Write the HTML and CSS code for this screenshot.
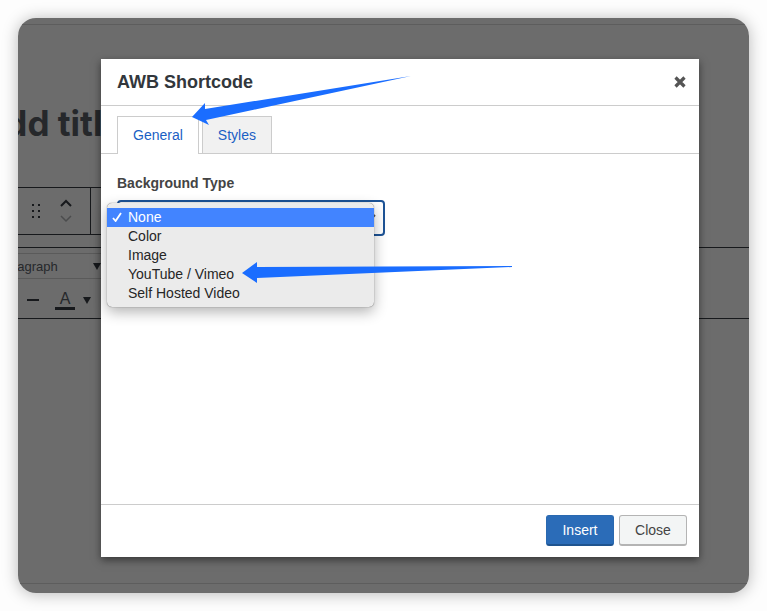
FILE: index.html
```
<!DOCTYPE html>
<html lang="en">
<head>
    <meta charset="UTF-8">
    <meta name="viewport" content="width=device-width, initial-scale=1.0">
    <title>AWB Shortcode</title>
    <link rel="stylesheet" href="styles.css">
</head>
<body>
    <div class="window">
        <div class="editor">
            <div class="topbar"></div>
            <h1 class="post-title">Add title</h1>
            <div class="block-toolbar">
                <div class="movers">
                    <svg width="12" height="16" viewBox="0 0 12 16" fill="#17191c">
                        <path d="M1 1h2v2H1zM1 7h2v2H1zM1 13h2v2H1zM7 1h2v2H7zM7 7h2v2H7zM7 13h2v2H7z"/>
                    </svg>
                    <svg width="12" height="24" viewBox="0 0 12 24" fill="none" stroke-width="2">
                        <path d="M1 7l5-5 5 5" stroke="#17191c"/>
                        <path d="M1 17l5 5 5-5" stroke="#4b4c4d" stroke-width="1.5"/>
                    </svg>
                </div>
            </div>
            <div class="classic">
                <div class="format-row">
                    <span>Paragraph</span>
                    <svg width="8" height="7" viewBox="0 0 8 7"><path d="M0 0h8L4 7z" fill="#17191c"/></svg>
                </div>
                <div class="color-row">
                    <svg width="12" height="2" viewBox="0 0 12 2"><path d="M0 0h12v2H0z" fill="#17191c"/></svg>
                    <span class="text-color">A</span>
                    <svg width="8" height="7" viewBox="0 0 8 7"><path d="M0 0h8L4 7z" fill="#17191c"/></svg>
                </div>
            </div>
            <div class="statusbar"></div>
        </div>

        <div class="modal" role="dialog" aria-labelledby="modal-title">
            <div class="modal-header">
                <h2 id="modal-title">AWB Shortcode</h2>
                <button class="close-icon" aria-label="Close dialog">
                    <svg width="12" height="12" viewBox="0 0 12 12"><path d="M1.5 1.5l9 9M10.5 1.5l-9 9" stroke="#555" stroke-width="3.2"/></svg>
                </button>
            </div>
            <div class="tabs" role="tablist">
                <button class="tab active" role="tab" aria-selected="true">General</button>
                <button class="tab" role="tab" aria-selected="false">Styles</button>
            </div>
            <div class="modal-body">
                <label for="bg-type">Background Type</label>
                <div class="select-wrap">
                    <select id="bg-type">
                        <option>None</option>
                        <option>Color</option>
                        <option>Image</option>
                        <option>YouTube / Vimeo</option>
                        <option>Self Hosted Video</option>
                    </select>
                    <ul class="menu" role="listbox" aria-label="Background Type">
                        <li class="selected" role="option" aria-selected="true">
                            <svg class="check" width="10" height="10" viewBox="0 0 10 10"><path d="M1 6l2.6 3L9 1" fill="none" stroke="#fff" stroke-width="1.8"/></svg>None</li>
                        <li role="option">Color</li>
                        <li role="option">Image</li>
                        <li role="option">YouTube / Vimeo</li>
                        <li role="option">Self Hosted Video</li>
                    </ul>
                </div>
            </div>
            <div class="modal-footer">
                <button class="btn primary">Insert</button>
                <button class="btn">Close</button>
            </div>

            <!-- pointers to the tab and the menu item -->
            <svg class="arrow arrow-tab" width="220" height="52" viewBox="0 0 220 52">
                <path d="M0 42L13 28V34L219 1 14 45l3 5z" fill="#1a6dff"/>
            </svg>
            <svg class="arrow arrow-item" width="272" height="24" viewBox="0 0 272 24">
                <path d="M0 12L15 1V6L270 5V6L15 17v5z" fill="#1a6dff"/>
            </svg>
        </div>
    </div>
</body>
</html>
```
FILE: styles.css
```
* {
    box-sizing: border-box;
}

body {
    margin: 0;
    height: 100vh;
    padding: 18px;
    background: #fdfdfd;
    color: #32373c;
    font-family: "Liberation Sans", Arial, sans-serif;
    font-size: 14px;
}

button {
    font: inherit;
    cursor: pointer;
}

.window {
    position: relative;
    height: 100%;
    border-radius: 18px;
    box-shadow: 0 1px 16px rgba(0, 0, 0, 0.28);
}

/* Dimmed editor behind the dialog */
.editor {
    display: flex;
    flex-direction: column;
    height: 100%;
    overflow: hidden;
    border-radius: 18px;
    background: #6c6c6c;
    color: #26282b;
}

.topbar {
    height: 7px;
    flex: none;
    border-bottom: 1px solid #5d5d5d;
}

.post-title {
    margin: 76px 0 41px -38px;
    font-family: Inter, sans-serif;
    font-size: 35px;
    line-height: 45px;
}

.block-toolbar {
    width: 100px;
    height: 48px;
    border: solid #17191c;
    border-width: 1px 0;
}

.movers {
    display: flex;
    align-items: center;
    gap: 17px;
    width: 73px;
    height: 100%;
    padding-left: 13px;
    border-right: 1px solid #17191c;
}

.classic {
    height: 72px;
    margin-top: 12px;
    padding-top: 5px;
    border: solid #17191c;
    border-width: 1px 0;
}

.format-row {
    display: flex;
    align-items: center;
    justify-content: space-between;
    width: 83px;
    height: 26px;
    border: solid #5a5a5a;
    border-width: 1px 0;
    font-size: 13px;
}

.format-row span {
    margin-left: -21px;
}

.color-row {
    display: flex;
    align-items: center;
    gap: 8px;
    height: 39px;
    padding: 3px 0 0 9px;
}

.text-color {
    width: 20px;
    margin-left: 8px;
    border-bottom: 3px solid #17191c;
    font-size: 16px;
    line-height: 17px;
    text-align: center;
}

.statusbar {
    height: 10px;
    margin-top: auto;
    border-top: 1px solid #5d5d5d;
}

/* Dialog */
.modal {
    position: absolute;
    top: 41px;
    right: 50px;
    bottom: 36px;
    left: 83px;
    display: flex;
    flex-direction: column;
    background: #fff;
    box-shadow: 0 3px 8px rgba(0, 0, 0, 0.5);
}

.modal-header {
    display: flex;
    align-items: center;
    justify-content: space-between;
    height: 47px;
    padding: 0 13px 0 16px;
    border-bottom: 1px solid #ccc;
}

.modal-header h2 {
    margin: 0;
    font-size: 18px;
}

.close-icon {
    display: flex;
    padding: 0;
    border: none;
    background: none;
}

.tabs {
    display: flex;
    gap: 3px;
    height: 48px;
    padding: 10px 16px 0;
    border-bottom: 1px solid #ccc;
}

.tab {
    height: 37px;
    padding: 0 15px;
    border: 1px solid #ccc;
    border-bottom: none;
    background: #f1f1f1;
    color: #1a5fc4;
}

.tab.active {
    height: 38px;
    padding-bottom: 1px;
    background: #fff;
}

.modal-body {
    flex: 1;
    padding: 19px 16px;
}

.modal-body label {
    display: block;
    margin-bottom: 7px;
    color: #444;
    font-weight: bold;
    line-height: 20px;
}

.select-wrap {
    position: relative;
    width: 268px;
}

.select-wrap select {
    display: block;
    width: 100%;
    height: 36px;
    padding: 0 8px;
    border: 2px solid #1d5396;
    border-radius: 4px;
    appearance: none;
    background: #fff url("data:image/svg+xml,%3Csvg xmlns='http://www.w3.org/2000/svg' width='12' height='8'%3E%3Cpath d='M1 1l5 5 5-5' fill='none' stroke='%23555' stroke-width='2'/%3E%3C/svg%3E") no-repeat right 7px center;
    color: #32373c;
    font: inherit;
}

.menu {
    position: absolute;
    top: 3px;
    right: 11px;
    left: -10px;
    margin: 0;
    padding: 5px 0 4px;
    border-radius: 5px;
    background: #ebebeb;
    box-shadow: 0 0 1px rgba(0, 0, 0, 0.7), 0 5px 14px rgba(0, 0, 0, 0.3);
    color: #262626;
    line-height: 19px;
    list-style: none;
}

.menu li {
    padding-left: 21px;
}

.menu .selected {
    background: #4284ff;
    color: #fff;
}

.check {
    margin: 0 6px 0 -16px;
}

.modal-footer {
    display: flex;
    justify-content: flex-end;
    gap: 5px;
    padding: 10px 12px 11px;
    border-top: 1px solid #ccc;
}

.btn {
    width: 68px;
    height: 31px;
    padding: 0;
    border: 1px solid #b4b4b4;
    border-bottom-width: 2px;
    border-radius: 3px;
    background: #f3f5f5;
    color: #444;
}

.btn.primary {
    border-color: #2a69b0 #2a69b0 #1f548f;
    background: #2b6cb8;
    color: #fff;
}

.arrow {
    position: absolute;
    pointer-events: none;
}

.arrow-tab {
    top: 16px;
    left: 91px;
}

.arrow-item {
    top: 202px;
    left: 141px;
}
```
